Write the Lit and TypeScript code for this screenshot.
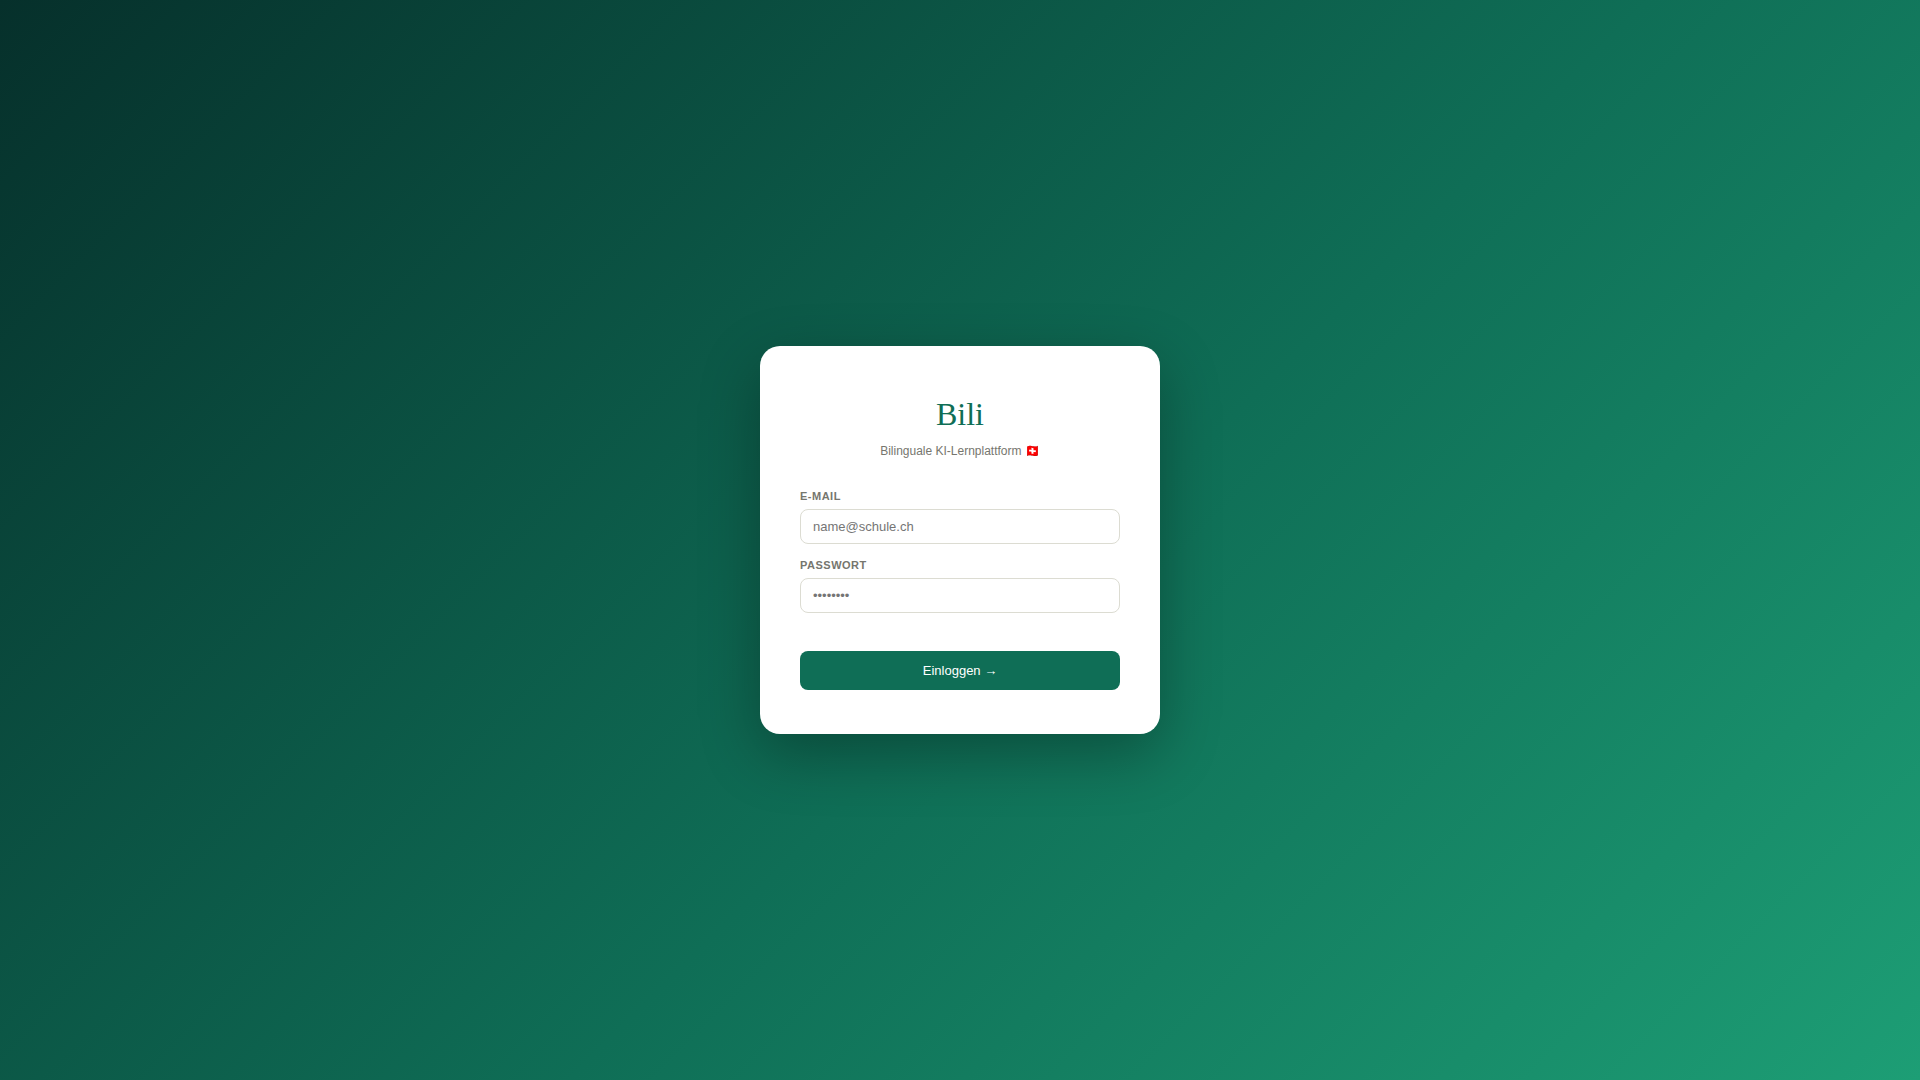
import { LitElement, html, css } from "lit";
import { customElement } from "lit/decorators.js";

@customElement("app-root")
export class AppRoot extends LitElement {
  static styles = css`
    :host {
      display: flex;
      align-items: center;
      justify-content: center;
      min-height: 100vh;
      box-sizing: border-box;
      background: linear-gradient(135deg, #06302b 0%, #0f6e56 55%, #1d9e75 100%);
      font-family: "Liberation Sans", Arial, sans-serif;
      font-size: 13px;
    }
    .card {
      box-sizing: border-box;
      width: 100%;
      max-width: 400px;
      padding: 44px 40px;
      border-radius: 20px;
      background: #fff;
      box-shadow: 0 20px 60px rgba(0, 0, 0, 0.3);
    }
    .brand {
      text-align: center;
      margin-bottom: 28px;
    }
    .logo {
      margin: 0;
      font-family: "Liberation Serif", serif;
      font-size: 32px;
      font-weight: 400;
      line-height: 48px;
      color: #0f6e56;
    }
    .tagline {
      margin: 4px 0 0;
      font-size: 12px;
      line-height: 18px;
      color: #76766e;
    }
    .form {
      display: flex;
      flex-direction: column;
    }
    .field {
      display: flex;
      flex-direction: column;
      gap: 5px;
      margin-bottom: 13px;
    }
    .label {
      font-size: 11px;
      font-weight: 700;
      line-height: 16px;
      letter-spacing: 0.5px;
      text-transform: uppercase;
      color: #76766e;
    }
    .input {
      box-sizing: border-box;
      width: 100%;
      padding: 9px 12px;
      border: 1px solid #dcdcd2;
      border-radius: 8px;
      background: #fff;
      font: inherit;
      color: #1a1a18;
      outline: none;
    }
    .input:focus {
      border-color: #0f6e56;
    }
    .submit {
      width: 100%;
      margin-top: 25px;
      padding: 12px;
      border: none;
      border-radius: 8px;
      background: #0f6e56;
      color: #fff;
      font: inherit;
      cursor: pointer;
    }
  `;

  private onSubmit(event: Event) {
    event.preventDefault();
  }

  render() {
    return html`
      <main class="card">
        <header class="brand">
          <h1 class="logo">Bili</h1>
          <p class="tagline">Bilinguale KI-Lernplattform 🇨🇭</p>
        </header>
        <form class="form" @submit=${this.onSubmit}>
          <div class="field">
            <label class="label" for="email">E-Mail</label>
            <input class="input" id="email" type="email" placeholder="name@schule.ch" />
          </div>
          <div class="field">
            <label class="label" for="password">Passwort</label>
            <input class="input" id="password" type="password" placeholder="••••••••" />
          </div>
          <button class="submit" type="submit">Einloggen →</button>
        </form>
      </main>
    `;
  }
}
